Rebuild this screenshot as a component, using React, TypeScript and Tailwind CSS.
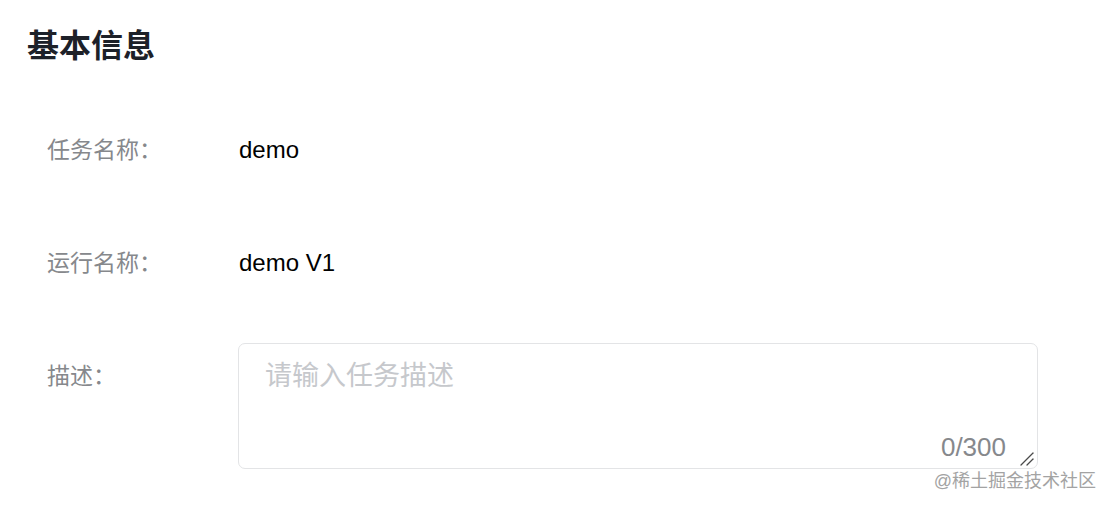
const font = { fontFamily: '"Liberation Sans", "Noto Sans CJK SC", sans-serif' }

function Row({ label, value }: { label: string; value: string }) {
  return (
    <div className="flex items-center h-[32px]">
      <div className="w-[192px] text-[23px] leading-[32px] text-[#86888c]">{label}：</div>
      <div className="text-[24px] leading-[32px] text-black">{value}</div>
    </div>
  )
}

export default function App() {
  return (
    <div className="relative w-[1112px] h-[508px] bg-white overflow-hidden" style={font}>
      <div className="pl-[27px] pt-[24px]">
        <h2 className="text-[32px] leading-[44px] font-bold text-[#1d2129]">基本信息</h2>
      </div>

      <div className="pl-[47px] mt-[66px] flex flex-col">
        <Row label="任务名称" value="demo" />
        <div className="mt-[81px]">
          <Row label="运行名称" value="demo V1" />
        </div>

        <div className="flex mt-[64px]">
          <div className="w-[191px] pt-[17px] text-[23px] leading-[32px] text-[#86888c]">描述：</div>
          <div className="relative">
            <textarea
              className="block w-[800px] h-[126px] resize-none rounded-[7px] border border-[#e3e4e6] px-[26px] pt-[14px] text-[27px] leading-[36px] text-black placeholder:text-[#c6c8cc] outline-none"
              placeholder="请输入任务描述"
              style={font}
            />
            <span className="absolute right-[32px] bottom-[7px] text-[26px] leading-[30px] text-[#86888c]">
              0/300
            </span>
            {/* resize grip */}
            <svg
              className="absolute right-[4px] bottom-[3px]"
              width="14"
              height="14"
              viewBox="0 0 14 14"
              fill="none"
              stroke="#4a4a4a"
              strokeWidth="1.3"
              strokeLinecap="round"
            >
              <path d="M1 13 L13 1" />
              <path d="M7 13 L13 7" />
            </svg>
          </div>
        </div>
      </div>

      <div className="absolute right-[16px] top-[469px] text-[18px] leading-[24px] text-[#a3a3a3]">
        @稀土掘金技术社区
      </div>
    </div>
  )
}
